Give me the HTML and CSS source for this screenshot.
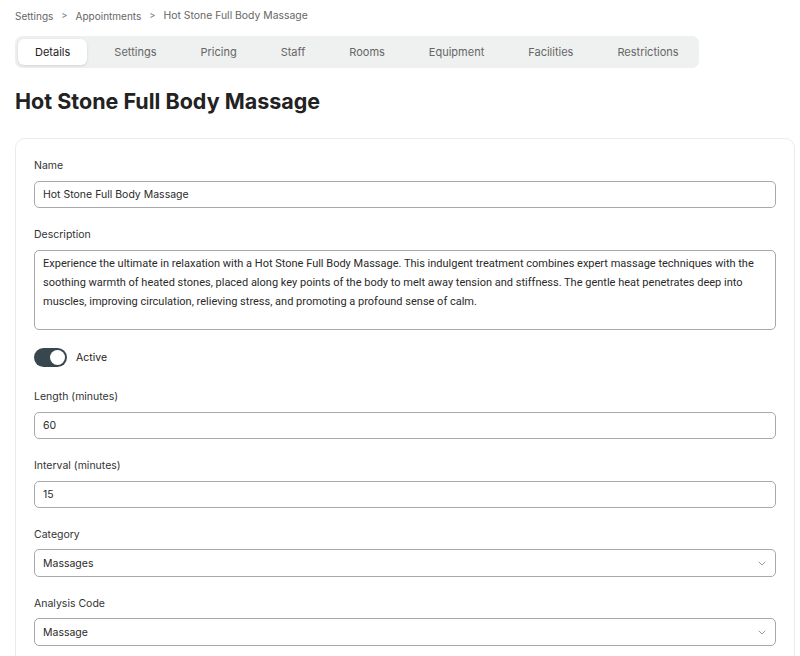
FILE: index.html
```html
<!DOCTYPE html>
<html lang="en">
<head>
  <meta charset="UTF-8" />
  <meta name="viewport" content="width=device-width, initial-scale=1.0"/>
  <title>Hot Stone Full Body Massage - Appointments</title>
  <link rel="stylesheet" href="styles.css">
</head>
<body>

  <nav class="breadcrumb">
    <a href="#">Settings</a>
    <span class="sep">&gt;</span>
    <a href="#">Appointments</a>
    <span class="sep">&gt;</span>
    <span class="current">Hot Stone Full Body Massage</span>
  </nav>

  <div class="tabs">
    <button class="tab active">Details</button>
    <button class="tab">Settings</button>
    <button class="tab">Pricing</button>
    <button class="tab">Staff</button>
    <button class="tab">Rooms</button>
    <button class="tab">Equipment</button>
    <button class="tab">Facilities</button>
    <button class="tab">Restrictions</button>
  </div>

  <h1 class="page-title">Hot Stone Full Body Massage</h1>

  <form class="card">
    <div class="field">
      <label for="name">Name</label>
      <input type="text" id="name" value="Hot Stone Full Body Massage" />
    </div>

    <div class="field">
      <label for="description">Description</label>
      <textarea id="description">Experience the ultimate in relaxation with a Hot Stone Full Body Massage. This indulgent treatment combines expert massage techniques with the soothing warmth of heated stones, placed along key points of the body to melt away tension and stiffness. The gentle heat penetrates deep into muscles, improving circulation, relieving stress, and promoting a profound sense of calm.</textarea>
    </div>

    <label class="switch">
      <input type="checkbox" checked />
      <span class="track"><span class="knob"></span></span>
      <span class="switch-label">Active</span>
    </label>

    <div class="field">
      <label for="length">Length (minutes)</label>
      <input type="text" id="length" value="60" />
    </div>

    <div class="field">
      <label for="interval">Interval (minutes)</label>
      <input type="text" id="interval" value="15" />
    </div>

    <div class="field">
      <label for="category">Category</label>
      <div class="select">
        <select id="category">
          <option>Massages</option>
          <option>Facials</option>
          <option>Body Treatments</option>
        </select>
        <svg class="chevron" viewBox="0 0 8 5" width="8" height="5"><path d="M1 1l3 3 3-3" fill="none" stroke="#999" stroke-width="1" stroke-linecap="round" stroke-linejoin="round"/></svg>
      </div>
    </div>

    <div class="field">
      <label for="analysis">Analysis Code</label>
      <div class="select">
        <select id="analysis">
          <option>Massage</option>
          <option>Facial</option>
          <option>Retail</option>
        </select>
        <svg class="chevron" viewBox="0 0 8 5" width="8" height="5"><path d="M1 1l3 3 3-3" fill="none" stroke="#999" stroke-width="1" stroke-linecap="round" stroke-linejoin="round"/></svg>
      </div>
    </div>
  </form>

</body>
</html>
```

FILE: styles.css
```css
* { margin: 0; padding: 0; box-sizing: border-box; }

body {
  font-family: 'Inter', 'Noto Sans', sans-serif;
  font-size: 10.5px;
  color: #222;
  background: #fff;
  padding: 8px 5px 0 15px;
  overflow: hidden;
}

/* breadcrumb */
.breadcrumb {
  display: flex;
  gap: 8px;
  font-size: 10px;
  line-height: 16px;
  color: #666;
}

.breadcrumb a {
  color: #666;
  text-decoration: none;
}

.breadcrumb .sep {
  font-size: 9.5px;
  color: #777;
}

.breadcrumb .current {
  font-size: 10.4px;
}

/* tab strip */
.tabs {
  display: inline-flex;
  gap: 10px;
  margin-top: 12px;
  padding: 3px;
  background: #eff0f0;
  border-radius: 7px;
}

.tab {
  font-family: inherit;
  font-size: 11px;
  height: 26px;
  padding: 0 17px;
  border: none;
  border-radius: 6px;
  background: none;
  color: #666;
  cursor: pointer;
}

.tab.active {
  background: #fff;
  color: #222;
  box-shadow: 0 1px 3px rgba(0, 0, 0, 0.12);
}

.page-title {
  font-size: 21.5px;
  font-weight: 700;
  line-height: 28px;
  color: #222;
  margin-top: 19px;
}

/* form card */
.card {
  margin-top: 23px;
  border: 1px solid #ebebeb;
  border-radius: 10px;
  padding: 19px 18px 40px;
  display: flex;
  flex-direction: column;
  gap: 19px;
}

.field {
  display: flex;
  flex-direction: column;
}

.field label {
  line-height: 16px;
  margin-bottom: 7px;
  color: #333;
}

.field input,
.field textarea,
.field select {
  font-family: inherit;
  font-size: 10.5px;
  color: #2a2a2a;
  border: 1px solid #a8a8a8;
  border-radius: 5px;
  background: #fff;
  outline: none;
}

.field input {
  height: 27px;
  padding: 0 8px;
}

.field textarea {
  height: 80px;
  padding: 3px 8px;
  font-size: 11px;
  line-height: 19px;
  resize: none;
  font-family: 'Roboto', 'Inter', sans-serif;
}

.field .select {
  position: relative;
  margin-top: -1px;
}

.select select {
  width: 100%;
  height: 28px;
  padding: 0 8px;
  appearance: none;
}

.select .chevron {
  position: absolute;
  right: 10px;
  top: 12px;
  pointer-events: none;
}

/* toggle */
.switch {
  display: flex;
  align-items: center;
  gap: 9px;
  height: 19px;
  margin-top: -1px;
  margin-bottom: 3px;
  cursor: pointer;
}

.switch input {
  display: none;
}

.track {
  width: 33px;
  height: 19px;
  border-radius: 10px;
  background: #38474d;
  position: relative;
}

.knob {
  position: absolute;
  top: 2px;
  right: 2px;
  width: 15px;
  height: 15px;
  border-radius: 50%;
  background: #fff;
}

.switch-label {
  color: #222;
}
```
